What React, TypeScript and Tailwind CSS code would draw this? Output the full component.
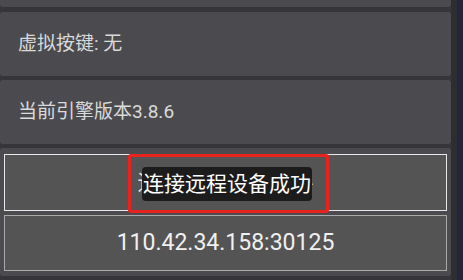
export default function App() {
  const font = { fontFamily: '"Roboto", "Noto Sans CJK SC", sans-serif' };
  return (
    <div className="w-[463px] h-[280px] overflow-hidden bg-[#36363a] flex" style={font}>
      <div className="w-[451px] flex flex-col gap-[4px]">
        {/* cut-off card at top */}
        <div className="h-[7px] rounded-b-[3px] bg-[#4b4b4f]" />
        <div className="mt-[1px] h-[64px] rounded-[3px] bg-[#4b4b4f] flex items-center pl-[18px] text-[19px] text-[#dadada]">
          虚拟按键: 无
        </div>
        <div className="h-[64px] rounded-[3px] bg-[#4b4b4f] flex items-center pl-[18px] text-[19px] text-[#dadada]">
          当前引擎版本3.8.6
        </div>
        <div className="h-[128px] rounded-[3px] bg-[#4b4b4f] px-[4px] pt-[6px] pb-[5px] flex flex-col gap-[4px]">
          <div className="relative h-[57px] border border-[#e8e8e8] bg-[#545454] flex items-center justify-center text-[22px] text-[#e8e8e8]">
            远程连接设备助手
            <div className="absolute left-[123px] top-[-1px] w-[201px] h-[59px] border-[3px] border-[#e8231e] rounded-[3px]" />
            <div className="absolute left-[137px] top-[12px] w-[170px] h-[34px] rounded-[4px] bg-[#1c1c1c] flex items-center justify-center text-[21px] text-white leading-none">
              连接远程设备成功
            </div>
          </div>
          <div className="h-[56px] border border-[#a9a9a9] bg-[#545454] flex items-center justify-center text-[23px] text-[#f0f0f0]">
            110.42.34.158:30125
          </div>
        </div>
      </div>
      <div className="w-[6px] bg-[#2e2e31]" />
      <div className="w-[6px] bg-[#24243a]" />
    </div>
  );
}
